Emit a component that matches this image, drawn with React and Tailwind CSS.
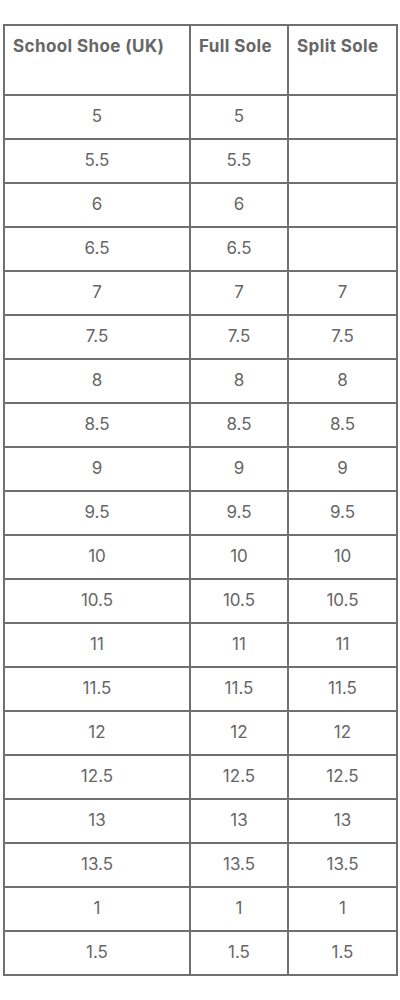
import React from "react";

const rows = [
  ["5", "5", ""],
  ["5.5", "5.5", ""],
  ["6", "6", ""],
  ["6.5", "6.5", ""],
  ["7", "7", "7"],
  ["7.5", "7.5", "7.5"],
  ["8", "8", "8"],
  ["8.5", "8.5", "8.5"],
  ["9", "9", "9"],
  ["9.5", "9.5", "9.5"],
  ["10", "10", "10"],
  ["10.5", "10.5", "10.5"],
  ["11", "11", "11"],
  ["11.5", "11.5", "11.5"],
  ["12", "12", "12"],
  ["12.5", "12.5", "12.5"],
  ["13", "13", "13"],
  ["13.5", "13.5", "13.5"],
  ["1", "1", "1"],
  ["1.5", "1.5", "1.5"],
];

export default function App() {
  return (
    <div className="bg-white w-[400px] h-[1000px] pt-[24px] pl-[3px]" style={{ fontFamily: "Inter, 'Open Sans', sans-serif" }}>
      <table className="border-collapse table-fixed w-[393px] text-[#666]">
        <colgroup>
          <col className="w-[186px]" />
          <col className="w-[98px]" />
          <col className="w-[109px]" />
        </colgroup>
        <thead>
          <tr className="h-[70px]">
            {["School Shoe (UK)", "Full Sole", "Split Sole"].map(h => (
              <th key={h} className="border-2 border-[#707070] align-top text-left font-bold text-[17px] leading-6 pt-[8px] pl-[8px] pr-0 tracking-[0.4px] whitespace-nowrap">
                {h}
              </th>
            ))}
          </tr>
        </thead>
        <tbody>
          {rows.map((r, i) => (
            <tr key={i} className="h-[44px]">
              {r.map((c, j) => (
                <td key={j} className="border-2 border-[#707070] text-center text-[17px] align-middle p-0">
                  {c}
                </td>
              ))}
            </tr>
          ))}
        </tbody>
      </table>
    </div>
  );
}
